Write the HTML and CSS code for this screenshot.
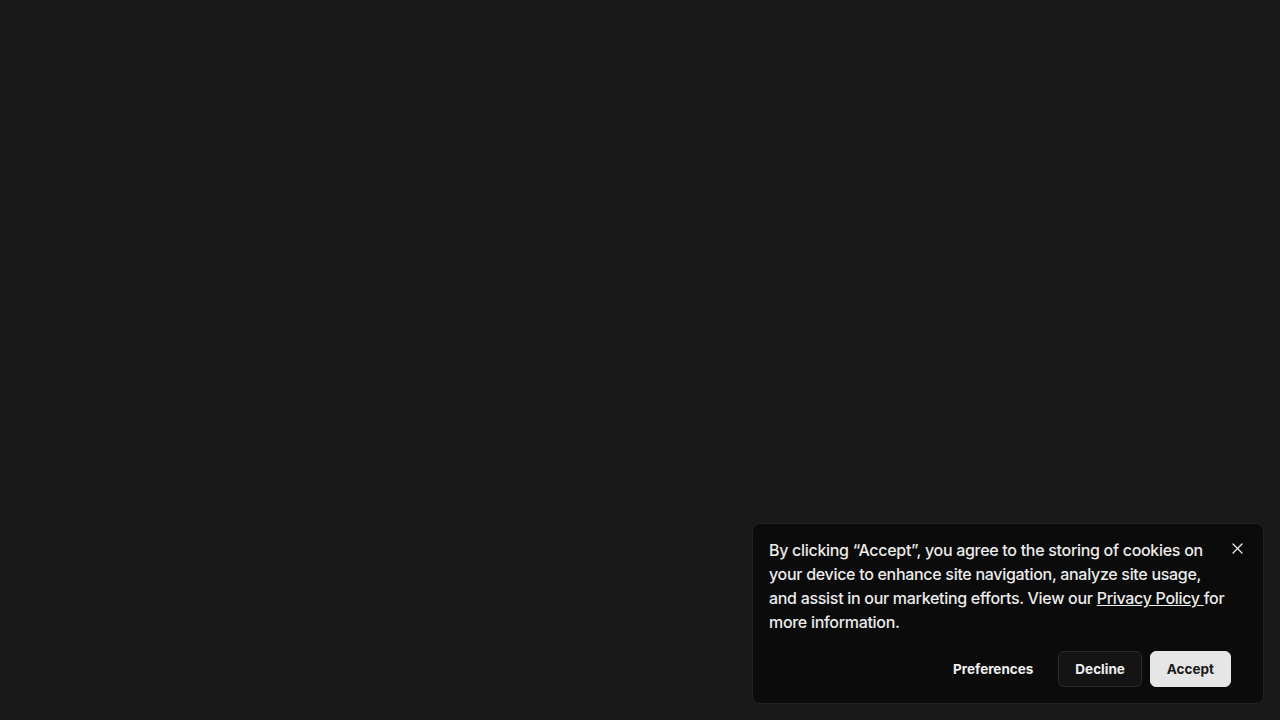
FILE: index.html
```html
<!DOCTYPE html>
<html lang="en">
<head>
<meta charset="utf-8">
<link rel="stylesheet" href="styles.css">
</head>
<body>
<div class="page">
  <div class="banner">
    <div class="top">
      <p class="msg">By clicking “Accept”, you agree to the storing of cookies on your device to enhance site navigation, analyze site usage, and assist in our marketing efforts. View our <a href="#">Privacy Policy </a>for more information.</p>
      <button class="close" aria-label="Close">
        <svg width="11" height="11" viewBox="0 0 11 11"><path d="M1 1L10 10M10 1L1 10" stroke="#f2f2f2" stroke-width="1.2" stroke-linecap="round"/></svg>
      </button>
    </div>
    <div class="actions">
      <button class="btn btn-text">Preferences</button>
      <button class="btn btn-dark">Decline</button>
      <button class="btn btn-light">Accept</button>
    </div>
  </div>
</div>
</body>
</html>
```
FILE: styles.css
```css
html, body { margin: 0; padding: 0; }
body {
  background: #191919;
  font-family: Inter, "Noto Sans", sans-serif;
  width: 1280px;
  height: 720px;
  overflow: hidden;
}
.page {
  height: 720px;
  display: flex;
  justify-content: flex-end;
  align-items: flex-end;
  padding: 0 16px 16px 0;
  box-sizing: border-box;
}
.banner {
  width: 512px;
  box-sizing: border-box;
  background: #0b0b0b;
  border: 1px solid #232323;
  border-radius: 8px;
  padding: 14px 18px 16px 16px;
}
.top {
  display: flex;
  align-items: flex-start;
}
.msg {
  margin: 0;
  width: 460px;
  flex: none;
  color: #ececec;
  font-size: 16px;
  line-height: 24px;
  font-weight: 500;
  letter-spacing: -0.3px;
}
.msg a { color: #ececec; text-decoration: underline; }
.close {
  background: none;
  border: 0;
  padding: 0;
  width: 16px;
  height: 20px;
  margin-left: 0;
  margin-top: 0;
  display: flex;
  align-items: center;
  justify-content: center;
  cursor: pointer;
}
.actions {
  display: flex;
  justify-content: flex-end;
  gap: 8px;
  margin-top: 17px;
  padding-right: 14px;
}
.btn {
  font-family: inherit;
  font-size: 13.5px;
  font-weight: 700;
  height: 36px;
  padding: 0 16px;
  border-radius: 6px;
  border: 1px solid transparent;
  cursor: pointer;
}
.btn-text { background: transparent; color: #f0f0f0; }
.btn-dark { background: #141414; border-color: #2c2c2c; color: #f0f0f0; }
.btn-light { background: #e6e6e6; border-color: #e6e6e6; color: #1a1a1a; }
```
